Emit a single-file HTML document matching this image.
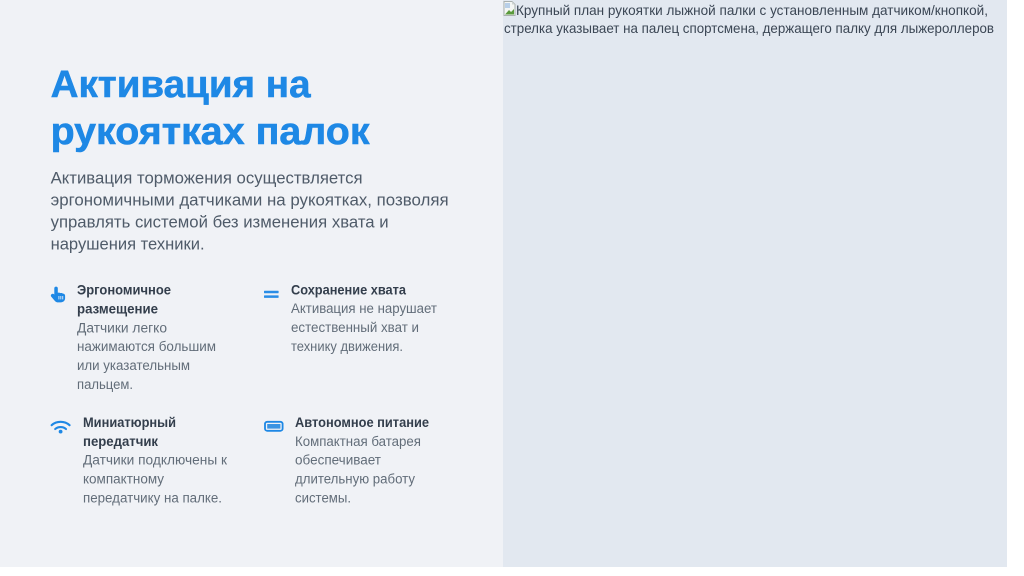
<!DOCTYPE html>
<html lang="ru">
<head>
<meta charset="utf-8">
<title>Активация на рукоятках палок</title>
<style>
html,body{margin:0;padding:0;background:#fff;width:1024px;height:576px;overflow:hidden}
svg{display:block;position:absolute;left:0;top:0}
text{font-family:"Liberation Sans",sans-serif;white-space:pre}
.t{font-size:37.6px;font-weight:700;fill:#1e88e5;stroke:#1e88e5;stroke-width:.55px}
.p{font-size:16.5px;fill:#4f5b69}
.h{font-size:13.4px;font-weight:700;fill:#333e4c}
.d{font-size:13.4px;fill:#626d79}
.a{font-size:13.8px;fill:#3b4654}
</style>
</head>
<body>
<svg width="1024" height="576" viewBox="0 0 1024 576" xmlns="http://www.w3.org/2000/svg">
<rect x="0" y="0" width="503" height="567" fill="#f0f2f6"/>
<rect x="503" y="0" width="504" height="567" fill="#e2e8f0"/>

<text class="t" x="50.6" y="97" textLength="260" lengthAdjust="spacingAndGlyphs">Активация на</text>
<text class="t" x="50.6" y="144" textLength="319" lengthAdjust="spacingAndGlyphs">рукоятках палок</text>

<text class="p" x="50.6" y="183.6" textLength="312" lengthAdjust="spacingAndGlyphs">Активация торможения осуществляется</text>
<text class="p" x="50.6" y="205.6" textLength="398" lengthAdjust="spacingAndGlyphs">эргономичными датчиками на рукоятках, позволяя</text>
<text class="p" x="50.6" y="227.6" textLength="338" lengthAdjust="spacingAndGlyphs">управлять системой без изменения хвата и</text>
<text class="p" x="50.6" y="249.6" textLength="154" lengthAdjust="spacingAndGlyphs">нарушения техники.</text>

<text class="h" x="77" y="294.5" textLength="94" lengthAdjust="spacingAndGlyphs">Эргономичное</text>
<text class="h" x="77" y="313.5" textLength="81" lengthAdjust="spacingAndGlyphs">размещение</text>
<text class="d" x="77" y="332.3" textLength="90" lengthAdjust="spacingAndGlyphs">Датчики легко</text>
<text class="d" x="77" y="351" textLength="139" lengthAdjust="spacingAndGlyphs">нажимаются большим</text>
<text class="d" x="77" y="370" textLength="113" lengthAdjust="spacingAndGlyphs">или указательным</text>
<text class="d" x="77" y="389" textLength="56" lengthAdjust="spacingAndGlyphs">пальцем.</text>

<text class="h" x="291" y="294.5" textLength="115" lengthAdjust="spacingAndGlyphs">Сохранение хвата</text>
<text class="d" x="291" y="313.2" textLength="146" lengthAdjust="spacingAndGlyphs">Активация не нарушает</text>
<text class="d" x="291" y="332.2" textLength="128" lengthAdjust="spacingAndGlyphs">естественный хват и</text>
<text class="d" x="291" y="351" textLength="112" lengthAdjust="spacingAndGlyphs">технику движения.</text>

<text class="h" x="83" y="427" textLength="93" lengthAdjust="spacingAndGlyphs">Миниатюрный</text>
<text class="h" x="83" y="446" textLength="75" lengthAdjust="spacingAndGlyphs">передатчик</text>
<text class="d" x="83" y="464.5" textLength="144" lengthAdjust="spacingAndGlyphs">Датчики подключены к</text>
<text class="d" x="83" y="483.5" textLength="81" lengthAdjust="spacingAndGlyphs">компактному</text>
<text class="d" x="83" y="502.5" textLength="139" lengthAdjust="spacingAndGlyphs">передатчику на палке.</text>

<text class="h" x="295" y="427" textLength="134" lengthAdjust="spacingAndGlyphs">Автономное питание</text>
<text class="d" x="295" y="446" textLength="126" lengthAdjust="spacingAndGlyphs">Компактная батарея</text>
<text class="d" x="295" y="464.5" textLength="86" lengthAdjust="spacingAndGlyphs">обеспечивает</text>
<text class="d" x="295" y="483.5" textLength="120" lengthAdjust="spacingAndGlyphs">длительную работу</text>
<text class="d" x="295" y="502.5" textLength="56" lengthAdjust="spacingAndGlyphs">системы.</text>

<!-- hand pointer -->
<path fill="#1e88e5" d="M54.3 288.4a1.75 1.75 0 0 1 3.5 0v4.4c1-.3 1.9-.2 2.6.3.9-.3 1.9-.1 2.5.5 1.2-.1 2.2.8 2.2 2.1v2.6c0 2.4-1.9 4.1-4.3 4.1h-2.6c-1.4 0-2.6-.6-3.5-1.7l-3.4-4c-.7-.8-.6-1.9.2-2.5.8-.6 1.8-.5 2.5.1l.3.3z"/>
<rect x="58.4" y="296" width="1" height="3.4" fill="#cfe2f5"/>
<rect x="60.3" y="296" width="1" height="3.4" fill="#cfe2f5"/>
<rect x="62.2" y="296" width="1" height="3.4" fill="#cfe2f5"/>

<!-- equals -->
<rect x="264" y="290.8" width="14.6" height="2.5" rx=".5" fill="#2a8de6"/>
<rect x="264" y="295.4" width="14.6" height="2.5" rx=".5" fill="#2a8de6"/>

<!-- wifi -->
<g fill="none" stroke="#1e88e5" stroke-width="2.1" stroke-linecap="round">
<path d="M51.6 425.2c5-4.5 13-4.5 18 0"/>
<path d="M55.2 429c3-2.6 7.8-2.6 10.8 0"/>
</g>
<circle cx="60.6" cy="431.6" r="1.9" fill="#1e88e5"/>

<!-- battery -->
<rect x="265" y="421.8" width="17.6" height="9" rx="2.2" fill="none" stroke="#1e88e5" stroke-width="1.8"/>
<rect x="267.2" y="424" width="13.2" height="4.6" fill="#3a93e2"/>

<!-- broken image icon -->
<path d="M504 1.5h8l3 3v11h-11z" fill="#f4f6f4" stroke="#a9b0ae" stroke-width="1"/>
<path d="M505 14.5l4-4.5 2 2 3-3v5.5z" fill="#5a9a3c"/>
<path d="M505 3h5v5h-5z" fill="#b8cfe8"/>
<path d="M512 1.5v3h3z" fill="#cfd4d2"/>

<text class="a" x="516" y="15" textLength="472" lengthAdjust="spacingAndGlyphs">Крупный план рукоятки лыжной палки с установленным датчиком/кнопкой,</text>
<text class="a" x="504" y="33" textLength="490" lengthAdjust="spacingAndGlyphs">стрелка указывает на палец спортсмена, держащего палку для лыжероллеров</text>
</svg>
</body>
</html>
